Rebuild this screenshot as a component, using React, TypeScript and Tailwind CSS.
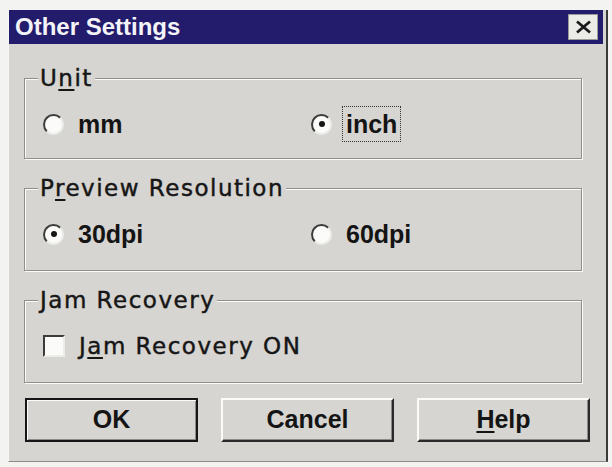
const sans = "font-['Liberation_Sans',Arial,sans-serif]";
const wide = "font-['DejaVu_Sans',Verdana,sans-serif] [-webkit-text-stroke:0.45px_#161616]";

function Radio({ checked }: { checked?: boolean }) {
  return (
    <span className="flex h-[21px] w-[21px] shrink-0 items-center justify-center rounded-full border-2 border-t-[#3c3c3a] border-l-[#3c3c3a] border-r-[#ecece9] border-b-[#ecece9] bg-[#fbfbfa]">
      {checked && <span className="h-[6px] w-[6px] rounded-full bg-[#151515]" />}
    </span>
  );
}

function RadioItem({
  label,
  checked,
  focus,
  first,
}: {
  label: string;
  checked?: boolean;
  focus?: boolean;
  first?: boolean;
}) {
  return (
    <div className={`flex items-center ${first ? 'w-[268px]' : ''}`}>
      <Radio checked={checked} />
      <span
        className={`ml-[10px] border px-[3px] py-[3px] text-[25px] leading-[28px] font-bold text-[#141414] ${sans} ${
          focus ? 'border-dotted border-[#333]' : 'border-transparent'
        }`}
      >
        {label}
      </span>
    </div>
  );
}

function Group({
  title,
  height,
  children,
  className = '',
}: {
  title: React.ReactNode;
  height: string;
  children: React.ReactNode;
  className?: string;
}) {
  return (
    <fieldset
      className={`w-[558px] border border-[#8f8f8c] shadow-[1px_1px_0_#fbfbf9,inset_1px_1px_0_#fbfbf9] ${height} ${className}`}
    >
      <legend
        className={`ml-[13px] bg-[#d6d5d1] px-[2px] text-[23px] leading-[22px] tracking-[1.5px] text-[#161616] ${wide}`}
      >
        {title}
      </legend>
      <div className="mt-[20px] flex h-[30px] items-center pl-[18px]">{children}</div>
    </fieldset>
  );
}

function Button({
  children,
  primary,
}: {
  children: React.ReactNode;
  primary?: boolean;
}) {
  return (
    <button
      className={`flex h-[44px] w-[173px] items-center justify-center bg-[#d6d5d1] text-[25px] font-bold text-[#141414] ${sans} ${
        primary
          ? 'border-2 border-[#161616] shadow-[inset_1px_1px_0_#fbfbf9,inset_-1px_-1px_0_#8a8a88]'
          : 'border-2 border-t-[#fbfbf9] border-l-[#fbfbf9] border-r-[#2a2a2a] border-b-[#2a2a2a] shadow-[inset_-1px_-1px_0_#8a8a88]'
      }`}
    >
      {children}
    </button>
  );
}

export default function App() {
  return (
    <div className="h-[467px] w-[612px] bg-[#f3f3f1] pt-[10px] pl-[8px]">
      <div className="flex h-[452px] w-[600px] flex-col border-l border-l-[#f7f7f5] border-r-2 border-r-[#3a3a38] border-b border-b-[#8c8c8a] bg-[#d6d5d1]">
        {/* title bar */}
        <div className="mr-[3px] flex h-[34px] items-center justify-between bg-[#231b6b] pl-[6px] pr-[5px]">
          <span className={`text-[24px] leading-none font-bold text-[#f4f4f8] ${sans}`}>
            Other Settings
          </span>
          <div className="flex h-[26px] w-[30px] items-center justify-center border border-[#9a9a98] bg-[#ebebe8]">
            <svg width="17" height="14" viewBox="0 0 17 14">
              <path d="M2 1.5 L15 12.5 M15 1.5 L2 12.5" stroke="#1a1a1a" strokeWidth="2.8" />
            </svg>
          </div>
        </div>

        <div className="flex flex-col px-[15px] pt-[23px]">
          <Group
            height="h-[92px]"
            title={
              <>
                U<span className="underline decoration-[1.5px] underline-offset-[3px]">n</span>it
              </>
            }
          >
            <RadioItem first label="mm" />
            <RadioItem label="inch" checked focus />
          </Group>

          <Group
            height="h-[94px]"
            className="mt-[18px]"
            title={
              <>
                P<span className="underline decoration-[1.5px] underline-offset-[3px]">r</span>eview Resolution
              </>
            }
          >
            <RadioItem first label="30dpi" checked />
            <RadioItem label="60dpi" />
          </Group>

          <Group height="h-[94px]" className="mt-[18px]" title="Jam Recovery">
            <div className="flex items-center">
              <span className="h-[22px] w-[22px] shrink-0 border-2 border-t-[#3c3c3a] border-l-[#3c3c3a] border-r-[#ecece9] border-b-[#ecece9] bg-[#fbfbfa]" />
              <span className={`ml-[14px] text-[23px] tracking-[1.5px] text-[#161616] ${wide}`}>
                J<span className="underline decoration-[1.5px] underline-offset-[3px]">a</span>m Recovery ON
              </span>
            </div>
          </Group>

          <div className="mt-[15px] flex gap-[23px] pl-[1px]">
            <Button primary>OK</Button>
            <Button>Cancel</Button>
            <Button>
              <span className="underline decoration-[2px] underline-offset-[3px]">H</span>elp
            </Button>
          </div>
        </div>
      </div>
    </div>
  );
}
